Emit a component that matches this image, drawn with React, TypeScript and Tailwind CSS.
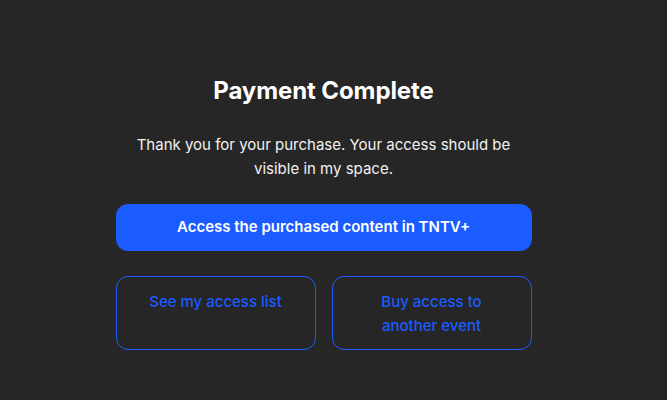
export default function App() {
  return (
    <div className="min-h-[400px] w-full bg-[#262626] pr-5 font-['Inter',sans-serif] text-white">
      <div className="mx-auto flex w-[416px] flex-col items-center pt-[75px]">
        <h1 className="text-[24px] font-bold leading-8 tracking-[-0.1px]">Payment Complete</h1>
        <p className="mt-[26px] w-[400px] text-center text-[15px] leading-6 text-[#f2f2f2]">
          Thank you for your purchase. Your access should be visible in my space.
        </p>
        <button className="mt-[23px] h-[47px] w-full rounded-xl bg-[#1a5cff] text-[15px] font-semibold text-white">
          Access the purchased content in TNTV+
        </button>
        <div className="mt-[25px] grid w-full grid-cols-2 gap-4">
          <button className="flex h-[74px] items-start justify-center rounded-xl border border-[#1a5cff] px-7 pt-[13px] text-[15px] font-medium leading-6 text-[#1a5cff]">
            See my access list
          </button>
          <button className="flex h-[74px] items-start justify-center rounded-xl border border-[#1a5cff] px-7 pt-[13px] text-[15px] font-medium leading-6 text-[#1a5cff]">
            Buy access to another event
          </button>
        </div>
      </div>
    </div>
  );
}
